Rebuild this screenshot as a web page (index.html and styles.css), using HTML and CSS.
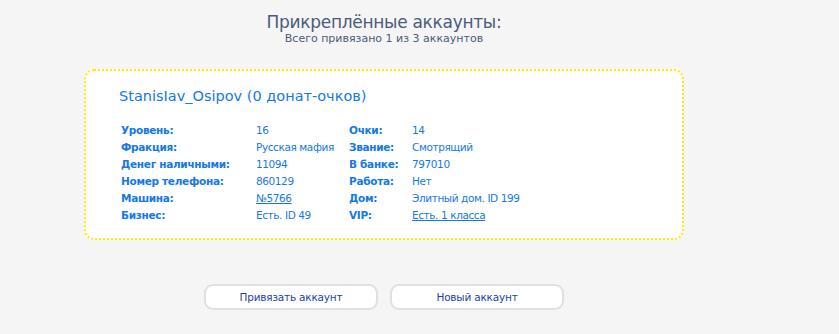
FILE: index.html
```html
<!DOCTYPE html>
<html lang="ru">
<head>
  <meta charset="UTF-8" />
  <title>Прикреплённые аккаунты</title>
  <link rel="stylesheet" href="styles.css">
</head>
<body>
  <div class="page">
    <div class="head">
      <div class="head-title">Прикреплённые аккаунты:</div>
      <div class="head-sub">Всего привязано 1 из 3 аккаунтов</div>
    </div>

    <div class="card">
      <div class="card-name">StanisIav_Osipov (0 донат-очков)</div>
      <div class="stats">
        <div class="lbl">Уровень:</div><div class="val">16</div>
        <div class="lbl">Очки:</div><div class="val">14</div>

        <div class="lbl">Фракция:</div><div class="val">Русская мафия</div>
        <div class="lbl">Звание:</div><div class="val">Смотрящий</div>

        <div class="lbl">Денег наличными:</div><div class="val">11094</div>
        <div class="lbl">В банке:</div><div class="val">797010</div>

        <div class="lbl">Номер телефона:</div><div class="val">860129</div>
        <div class="lbl">Работа:</div><div class="val">Нет</div>

        <div class="lbl">Машина:</div><div class="val"><a href="#">№5766</a></div>
        <div class="lbl">Дом:</div><div class="val">Элитный дом. ID 199</div>

        <div class="lbl">Бизнес:</div><div class="val">Есть. ID 49</div>
        <div class="lbl">VIP:</div><div class="val"><a href="#">Есть. 1 класса</a></div>
      </div>
    </div>

    <div class="actions">
      <button class="btn">Привязать аккаунт</button>
      <button class="btn">Новый аккаунт</button>
    </div>
  </div>
</body>
</html>
```

FILE: styles.css
```css
/* RESET */
* { box-sizing: border-box; margin: 0; padding: 0; }
html, body { width: 100%; height: 100%; overflow: hidden; }

body {
  background: #f5f5f5;
  font-family: "DejaVu Sans", Tahoma, sans-serif;
}

/* PAGE COLUMN */
.page {
  width: 600px;
  margin-left: 84px;
  padding-top: 12px;
}

/* HEADER */
.head { text-align: center; color: #4b5b78; }
.head-title { font-size: 17px; line-height: 20px; letter-spacing: -0.3px; }
.head-sub { font-size: 11px; line-height: 14px; letter-spacing: 0; }

/* ACCOUNT CARD */
.card {
  margin-top: 23px;
  height: 171px;
  background: #fff;
  border: 2px dotted #ffea00;
  border-radius: 10px;
  padding: 15px 0 0 33px;
}
.card-name {
  font-size: 14.5px;
  line-height: 20px;
  color: #1478e8;
  letter-spacing: 0;
}

.stats {
  margin-top: 18px;
  margin-left: 2px;
  display: grid;
  grid-template-columns: 135px 93px 63px auto;
  grid-auto-rows: 17px;
  font-size: 10.5px;
  color: #1478e8;
}
.lbl { font-weight: bold; letter-spacing: -0.3px; }
.val { letter-spacing: -0.4px; }
.val a { color: #1478e8; }

/* BUTTONS */
.actions {
  margin-top: 44px;
  display: flex;
  justify-content: center;
  gap: 12px;
}
.btn {
  width: 174px;
  height: 26px;
  background: #fff;
  border: 2px solid #e0e0e0;
  border-radius: 9px;
  font-family: inherit;
  font-size: 10.5px;
  color: #1b3fa5;
  letter-spacing: -0.2px;
  cursor: pointer;
}
```
